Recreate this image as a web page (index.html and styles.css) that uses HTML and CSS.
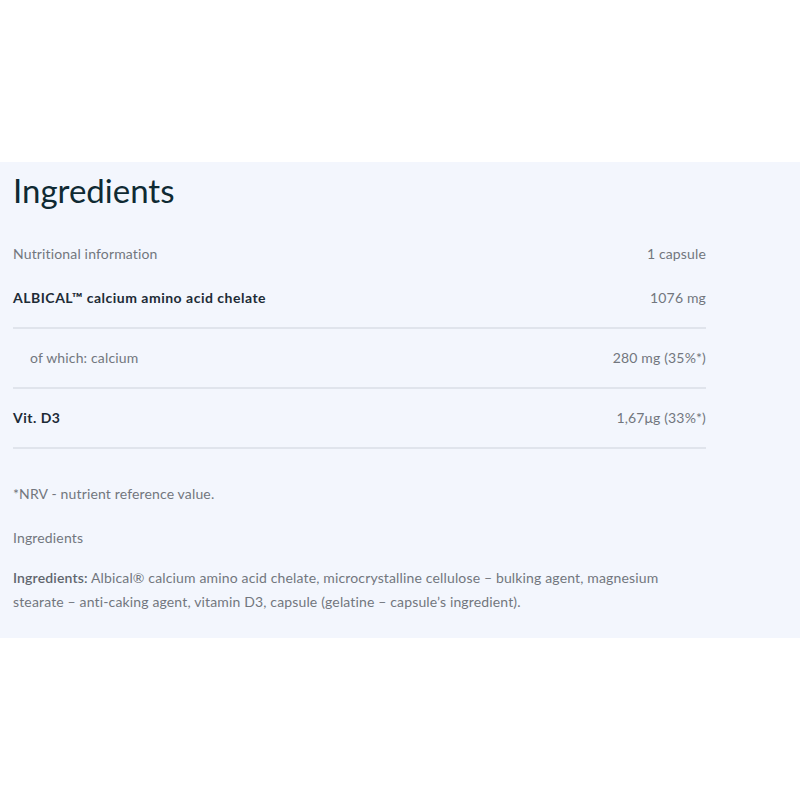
FILE: index.html
```html
<!DOCTYPE html>
<html lang="en">
<head>
<meta charset="UTF-8">
<meta name="viewport" content="width=device-width, initial-scale=1.0">
<title>Ingredients</title>
<link rel="stylesheet" href="styles.css">
</head>
<body>

<div class="ingredients">
    <div class="inner">
        <h1>Ingredients</h1>

        <table class="nutrition">
            <tr class="head-row">
                <td>Nutritional information</td>
                <td class="value">1 capsule</td>
            </tr>
            <tr>
                <td class="name">ALBICAL™ calcium amino acid chelate</td>
                <td class="value">1076 mg</td>
            </tr>
            <tr>
                <td class="sub">of which: calcium</td>
                <td class="value">280 mg (35%*)</td>
            </tr>
            <tr>
                <td class="name">Vit. D3</td>
                <td class="value">1,67μg (33%*)</td>
            </tr>
        </table>

        <p class="note">*NRV - nutrient reference value.</p>
        <p class="label">Ingredients</p>
        <p class="composition"><strong>Ingredients:</strong> Albical® calcium amino acid chelate, microcrystalline cellulose – bulking agent, magnesium stearate – anti-caking agent, vitamin D3, capsule (gelatine – capsule’s ingredient).</p>
    </div>
</div>

</body>
</html>
```

FILE: styles.css
```css
body {
    margin: 0;
    padding: 0;
    background: #fff;
    font-family: Lato, 'Noto Sans', sans-serif;
    color: #72767e;
    font-size: 14px;
    letter-spacing: 0.15px;
}
.ingredients {
    margin-top: 162px;
    background-color: #f3f6fd;
    padding: 10px 13px 24px;
}
.inner {
    width: 693px;
}
h1 {
    margin: 0;
    font-size: 33px;
    line-height: 36px;
    font-weight: 400;
    letter-spacing: 0;
    color: #0f2a33;
}
.nutrition {
    width: 100%;
    margin-top: 26px;
    border-collapse: collapse;
}
.nutrition td {
    padding: 19px 0;
    line-height: 20px;
    border-bottom: 2px solid #e0e4ec;
}
.nutrition .head-row td {
    padding: 10px 0 5px;
    border-bottom: none;
}
.nutrition .value {
    text-align: right;
}
.nutrition .name {
    font-weight: 700;
    color: #1d2b36;
    letter-spacing: 0.5px;
}
.nutrition .sub {
    padding-left: 17px;
}
p {
    margin: 0;
    line-height: 24px;
}
.note {
    margin-top: 33px;
}
.label {
    margin-top: 20px;
}
.composition {
    margin-top: 16px;
    padding-right: 20px;
}
.composition strong {
    font-weight: 600;
    color: #60656d;
}
```
